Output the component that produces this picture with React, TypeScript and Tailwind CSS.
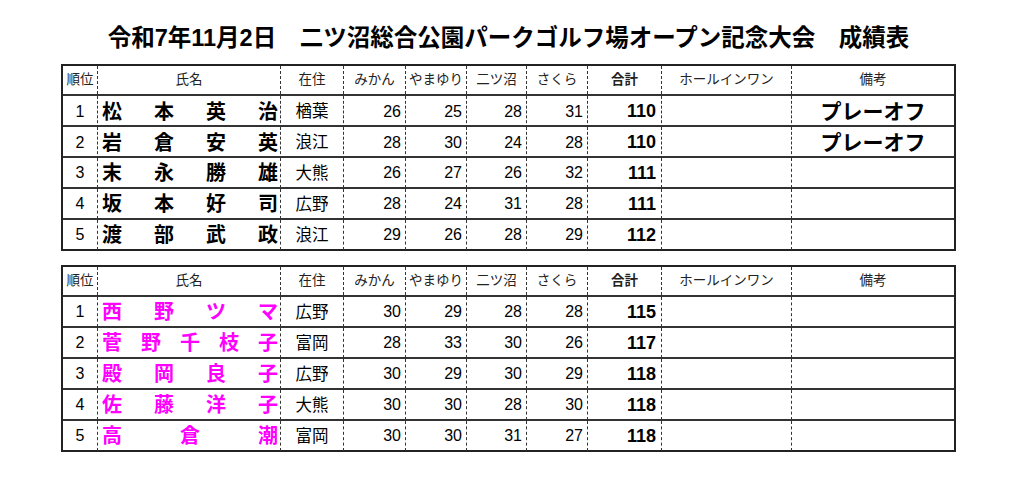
const cols = 'grid grid-cols-[35px_183px_63px_62px_61px_60px_61px_74px_130px_162px]';

type Row = {
  rank: number;
  name: string;
  home: string;
  scores: number[];
  total: number;
  note?: string;
};

const first: Row[] = [
  { rank: 1, name: '松本英治', home: '楢葉', scores: [26, 25, 28, 31], total: 110, note: 'プレーオフ' },
  { rank: 2, name: '岩倉安英', home: '浪江', scores: [28, 30, 24, 28], total: 110, note: 'プレーオフ' },
  { rank: 3, name: '末永勝雄', home: '大熊', scores: [26, 27, 26, 32], total: 111 },
  { rank: 4, name: '坂本好司', home: '広野', scores: [28, 24, 31, 28], total: 111 },
  { rank: 5, name: '渡部武政', home: '浪江', scores: [29, 26, 28, 29], total: 112 },
];

const second: Row[] = [
  { rank: 1, name: '西野ツマ', home: '広野', scores: [30, 29, 28, 28], total: 115 },
  { rank: 2, name: '菅野千枝子', home: '富岡', scores: [28, 33, 30, 26], total: 117 },
  { rank: 3, name: '殿岡良子', home: '広野', scores: [30, 29, 30, 29], total: 118 },
  { rank: 4, name: '佐藤洋子', home: '大熊', scores: [30, 30, 28, 30], total: 118 },
  { rank: 5, name: '高倉潮', home: '富岡', scores: [30, 30, 31, 27], total: 118 },
];

const headers = ['順位', '氏名', '在住', 'みかん', 'やまゆり', '二ツ沼', 'さくら', '合計', 'ホールインワン', '備考'];

const sep = 'border-r border-dashed border-[#333]';

function ScoreTable({ rows, pink }: { rows: Row[]; pink?: boolean }) {
  return (
    <div className="w-[895px] border-2 border-[#222] bg-white">
      <div className={`${cols} h-[28px] text-[13.5px] text-[#222]`}>
        {headers.map((h, i) => (
          <div
            key={h}
            className={`flex items-center justify-center ${i < headers.length - 1 ? sep : ''} ${h === '合計' ? 'font-bold' : ''}`}
          >
            {h}
          </div>
        ))}
      </div>
      {rows.map((r) => (
        <div key={r.rank} className={`${cols} h-[31px] border-t-2 border-[#333]`}>
          <div className={`flex items-center justify-center text-[16px] ${sep}`}>{r.rank}</div>
          <div
            className={`flex items-center justify-between pl-[4px] pr-[2px] text-[20px] font-bold ${sep} ${pink ? 'text-[#f0f]' : 'text-black'}`}
          >
            {r.name.split('').map((c, i) => (
              <span key={i}>{c}</span>
            ))}
          </div>
          <div className={`flex items-center justify-center text-[16.5px] ${sep}`}>{r.home}</div>
          {r.scores.map((s, i) => (
            <div key={i} className={`flex items-center justify-end pr-[4px] text-[16px] ${sep}`}>
              {s}
            </div>
          ))}
          <div className={`flex items-center justify-end pr-[5px] text-[18px] font-bold ${sep}`}>{r.total}</div>
          <div className={sep}></div>
          <div className="flex items-center justify-center text-[21px] font-bold">{r.note}</div>
        </div>
      ))}
    </div>
  );
}

export default function App() {
  return (
    <div
      className="min-h-[497px] w-[1024px] bg-white pl-[61px] text-black"
      style={{ fontFamily: '"Liberation Sans", "Noto Sans CJK JP", sans-serif' }}
    >
      <div className="flex h-[64px] w-[895px] items-center justify-center pt-[14px] text-[23.5px] font-bold">
        令和7年11月2日　二ツ沼総合公園パークゴルフ場オープン記念大会　成績表
      </div>
      <ScoreTable rows={first} />
      <div className="h-[14px]"></div>
      <ScoreTable rows={second} pink />
    </div>
  );
}
